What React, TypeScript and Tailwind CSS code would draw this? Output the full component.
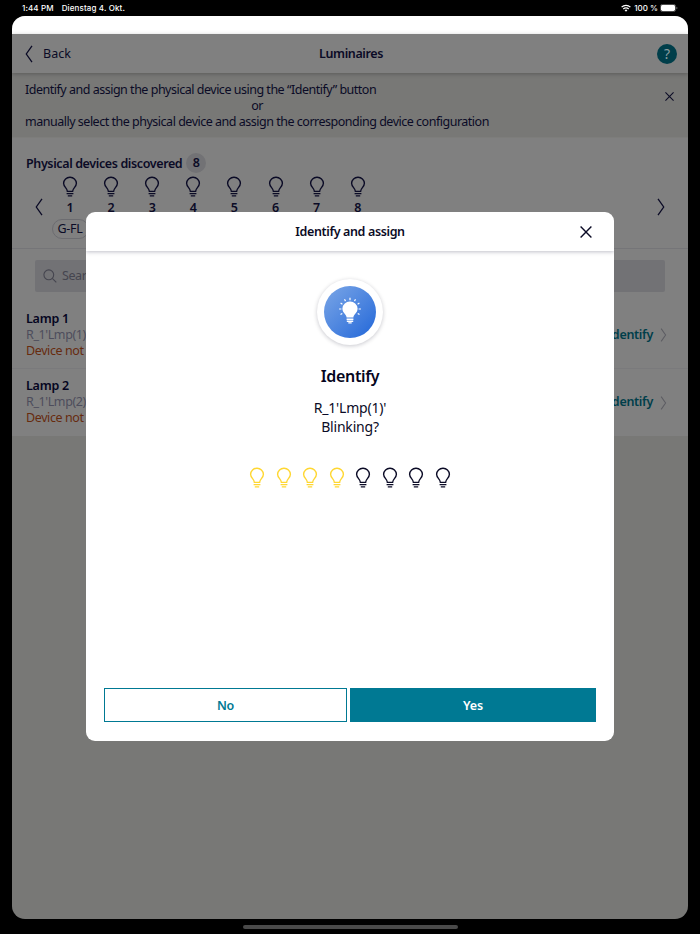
import React from "react";

function Bulb({ className = "" }: { className?: string }) {
  return (
    <svg viewBox="0 0 16 22" fill="none" stroke="currentColor" className={"h-[22px] w-4 shrink-0 " + className}>
      <path d="M5.4 15.4C5.4 11.9 1.6 11.2 1.6 7.3A6.3 6.3 0 0 1 8 1.2a6.3 6.3 0 0 1 6.4 6.1c0 3.9-3.8 4.6-3.8 8.1z" strokeWidth="1.4" />
      <path d="M4.6 17.7h6.8M5.8 19.9h4.4" strokeWidth="1.3" />
    </svg>
  );
}

function Chevron({ left = false, className = "" }: { left?: boolean; className?: string }) {
  return (
    <svg viewBox="0 0 8 18" fill="none" stroke="currentColor" strokeWidth="1.3" className={"shrink-0 " + className}>
      <path d={left ? "M7 .8 1.3 9 7 17.2" : "M1 .8 6.7 9 1 17.2"} />
    </svg>
  );
}

function Cross({ className = "" }: { className?: string }) {
  return (
    <svg viewBox="0 0 12 12" fill="none" stroke="currentColor" strokeWidth="1.4" className={"shrink-0 " + className}>
      <path d="M.6.6l10.8 10.8M11.4.6.6 11.4" />
    </svg>
  );
}

function StatusBar() {
  return (
    <div className="flex h-4 items-center pr-[22px] pl-[22px] font-['Inter',sans-serif] text-[8px] leading-4 font-medium text-white">
      <span className="tracking-[0.12px]">1:44 PM</span>
      <span className="ml-2 tracking-[0.13px]">Dienstag 4. Okt.</span>
      <svg viewBox="0 0 10 8" className="mr-[3px] ml-auto h-2 w-[10px]" fill="none" stroke="white" strokeWidth="1.3">
        <path d="M.6 3.1a6.3 6.3 0 0 1 8.8 0M2.3 5a3.8 3.8 0 0 1 5.4 0" />
        <path d="M5 7.8 3.6 6.3a2 2 0 0 1 2.8 0z" fill="white" stroke="none" />
      </svg>
      <span>100 %</span>
      <svg viewBox="0 0 18 8" className="ml-[2px] h-2 w-[18px]">
        <rect x=".4" y=".4" width="15.2" height="7.2" rx="2" fill="none" stroke="#777" strokeWidth=".7" />
        <rect x="1" y="1" width="14" height="6" rx="1.4" fill="white" />
        <path d="M16.5 2.8v2.4q.9-.4.9-1.2t-.9-1.2" fill="#888" />
      </svg>
    </div>
  );
}

function LampRow({ name, id, divider }: { name: string; id: string; divider?: boolean }) {
  return (
    <div className={"flex items-center pr-[21px] pl-[14px] " + (divider ? "h-[67px] border-b border-[#7a7a7c]" : "h-[67px]")}>
      <div className="-mt-px text-[12.5px] leading-4 tracking-[-0.4px]">
        <div className="font-semibold tracking-[-0.25px] text-[#050520]">{name}</div>
        <div className="text-[#4d4d5c]">{id}</div>
        <div className="text-[#672b0e]">Device not found</div>
      </div>
      <div className="ml-auto text-[12.5px] font-semibold tracking-[-0.3px] text-[#003e4a]">Identify</div>
      <Chevron className="ml-[7px] h-[14px] w-[7px] text-[#5c5c62]" />
    </div>
  );
}

export default function App() {
  return (
    <div className="relative flex h-[934px] w-[700px] flex-col overflow-hidden bg-black font-['Noto_Sans',sans-serif] text-[12.5px] text-[#0b0b26]">
      <StatusBar />
      <div className="mx-[12px] flex h-[903px] w-[676px] flex-col overflow-hidden rounded-[13px] bg-[#787876]">
        <div className="h-[18px] shrink-0 bg-white" />
        <header className="z-10 flex h-[39px] shrink-0 items-center bg-[#808080] pr-[11px] pl-[13px] shadow-[0_1px_4px_rgba(0,0,0,0.25)]">
          <div className="flex flex-1 items-center">
            <Chevron left className="h-[18px] w-[8px]" />
            <span className="mt-[2px] ml-[10px]">Back</span>
          </div>
          <h1 className="mt-[2px] font-semibold tracking-[-0.4px]">Luminaires</h1>
          <div className="flex flex-1 justify-end">
            <span className="flex h-5 w-5 items-center justify-center rounded-full bg-[#003e4a] text-[14px] text-[#8b9da0]">?</span>
          </div>
        </header>
        <section className="flex h-[65px] shrink-0 justify-between border-b border-[#7d7d7b] pt-[9px] pr-[14px] pl-[13px]">
          <div className="w-[464px] text-[12.5px] leading-4 tracking-[-0.49px] whitespace-nowrap">
            <div>Identify and assign the physical device using the “Identify” button</div>
            <div className="text-center">or</div>
            <div>manually select the physical device and assign the corresponding device configuration</div>
          </div>
          <Cross className="mt-[10px] h-[9px] w-[9px]" />
        </section>
        <section className="flex h-[111px] shrink-0 flex-col border-b border-[#757578] bg-[#808080] pt-[14px]">
          <div className="flex h-[22px] items-center pl-[14px]">
            <h2 className="mt-[2px] font-semibold tracking-[-0.38px]">Physical devices discovered</h2>
            <span className="ml-1 flex h-5 w-5 items-center justify-center rounded-full bg-[#727275] font-semibold">8</span>
          </div>
          <div className="flex h-[66px] pt-[2px] pr-[23px] pl-[23px]">
            <Chevron left className="mt-[22px] h-[18px] w-[8px]" />
            <div className="ml-[6.5px] flex">
              {[1, 2, 3, 4, 5, 6, 7, 8].map((n) => (
                <div key={n} className="flex w-[41.1px] flex-col items-center">
                  <Bulb />
                  <span className="mt-[2px] text-[12.5px] leading-4 font-semibold">{n}</span>
                  {n === 1 && (
                    <span className="mt-[3px] flex h-[20px] items-center rounded-full border border-[#6c6c70] px-[5px] tracking-[-0.3px] whitespace-nowrap">G-FL</span>
                  )}
                </div>
              ))}
            </div>
            <Chevron className="mt-[22px] ml-auto h-[18px] w-[8px]" />
          </div>
        </section>
        <section className="shrink-0 bg-[#808080] pt-[11px]">
          <div className="mx-[23px] mb-[11px] flex h-8 items-center rounded-[2px] bg-[#727275] pl-2 text-[#45454f]">
            <svg viewBox="0 0 14 14" className="h-[14px] w-[14px]" fill="none" stroke="currentColor" strokeWidth="1.1">
              <circle cx="5.8" cy="5.8" r="4.9" />
              <path d="M9.3 9.3l4 4" />
            </svg>
            <span className="mt-px ml-[5px] tracking-[-0.4px]">Search</span>
          </div>
          <div className="-mt-px">
            <LampRow name="Lamp 1" id="R_1'Lmp(1)'" divider />
            <LampRow name="Lamp 2" id="R_1'Lmp(2)'" />
          </div>
        </section>
      </div>
      <div className="mx-auto mt-[6px] h-[3.5px] w-[215px] rounded-full bg-[#494949]" />

      <div className="absolute top-[212px] left-[86px] flex h-[529px] w-[528px] flex-col overflow-hidden rounded-[9px] bg-white">
        <header className="flex h-[39px] shrink-0 items-center pr-[22px] pl-[22px] shadow-[0_1px_4px_rgba(0,0,40,0.25)]">
          <div className="flex-1" />
          <h2 className="mt-[2px] font-semibold tracking-[-0.37px]">Identify and assign</h2>
          <div className="flex flex-1 justify-end">
            <Cross className="h-3 w-3" />
          </div>
        </header>
        <div className="flex flex-1 flex-col items-center pt-[28px]">
          <div className="flex h-[66px] w-[66px] items-center justify-center rounded-full bg-white shadow-[0_1px_4px_rgba(0,0,30,0.22)]">
            <div className="flex h-[52px] w-[52px] items-center justify-center rounded-full bg-gradient-to-br from-[#7ba6e6] to-[#1f66d8]">
              <svg viewBox="0 0 24 28" className="-mt-[2px] h-7 w-6 text-white">
                <path d="M8.6 20.5c0-3.4-4.2-4.4-4.2-9.1A7.4 7.4 0 0 1 12 4.5a7.4 7.4 0 0 1 7.6 6.9c0 4.7-4.2 5.7-4.2 9.1z" fill="currentColor" />
                <path d="M8.6 22.2h6.8M8.8 24.2h6.4M10.3 25.9h3.4" stroke="currentColor" strokeWidth="1.4" />
                <path d="M12 .8v2.4M6.5 2.3l1 1.8M17.5 2.3l-1 1.8M2.6 6l1.8 1.2M21.4 6l-1.8 1.2M1.1 12h2.3M22.9 12h-2.3M2.5 17.5l1.8-1.1M21.5 17.5l-1.8-1.1" stroke="currentColor" strokeWidth="1.2" />
              </svg>
            </div>
          </div>
          <h3 className="mt-[20px] text-[16px] leading-[22px] font-semibold tracking-[-0.35px] text-[#050520]">Identify</h3>
          <p className="mt-[11px] text-center text-[14px] leading-[19px] tracking-[-0.2px]">
            R_1'Lmp(1)'
            <br />
            Blinking?
          </p>
          <div className="mt-[31px] flex gap-[10.45px]">
            {[0, 1, 2, 3, 4, 5, 6, 7].map((n) => (
              <Bulb key={n} className={n < 4 ? "text-[#ffd732]" : ""} />
            ))}
          </div>
        </div>
        <footer className="flex h-[53px] shrink-0 gap-[3px] pr-[18px] pb-[19px] pl-[18px] text-[12.5px] font-semibold tracking-[-0.2px]">
          <button className="w-[243px] border border-[#007993] pt-[2px] text-[#007993]">No</button>
          <button className="flex-1 bg-[#007993] pt-[2px] text-white">Yes</button>
        </footer>
      </div>
    </div>
  );
}
